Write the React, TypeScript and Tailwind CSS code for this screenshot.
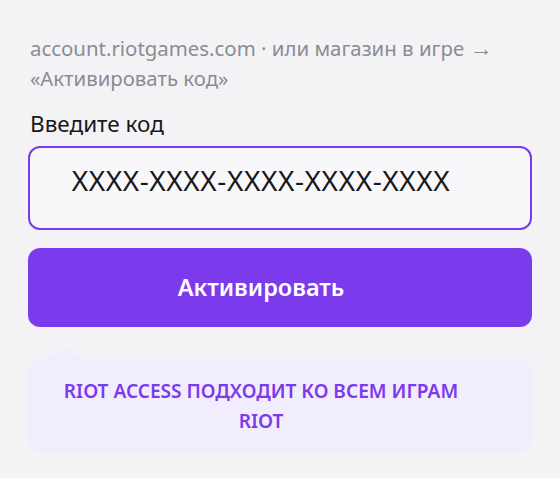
export default function App() {
  return (
    <div
      className="min-h-[478px] w-full bg-[#f3f3f6] px-7 pt-[33px]"
      style={{ fontFamily: '"Noto Sans", "Open Sans", sans-serif' }}
    >
      {/* Подсказка где активировать */}
      <p className="pl-[2px] text-[20.4px] leading-[30px] text-[#8b8b94]">
        account.riotgames.com · или магазин в игре <span className="text-[23px] leading-[20px]">→</span> «Активировать код»
      </p>

      <label className="mt-4 block pl-[2px] text-[22.5px] leading-[30px] text-[#18181b]">Введите код</label>

      <div className="mt-[7px] flex h-[84px] w-full items-start justify-center rounded-[12px] border-2 border-[#7c3aed] bg-[#f8f8fb] pr-[38px] pt-[14px]">
        <span className="text-[28px] leading-[36px] tracking-[0.6px] text-[#18181b]">XXXX-XXXX-XXXX-XXXX-XXXX</span>
      </div>

      <button className="mt-[18px] flex h-[79px] w-full items-center justify-center rounded-[12px] bg-[#7c3aed] pr-[38px] text-[23.5px] font-semibold text-white">
        Активировать
      </button>

      {/* Плашка с хвостиком */}
      <div className="relative mt-[33px] rounded-[14px] bg-[#f1edfd] py-4 pl-5 pr-[58px] text-center">
        <div className="absolute -top-3 left-[15px] h-0 w-0 border-x-[22px] border-b-[12px] border-x-transparent border-b-[#f1edfd]" />
        <p className="text-[19.1px] font-semibold uppercase leading-[30px] text-[#7c3aed]">
          Riot Access подходит ко всем играм Riot
        </p>
      </div>
    </div>
  );
}
